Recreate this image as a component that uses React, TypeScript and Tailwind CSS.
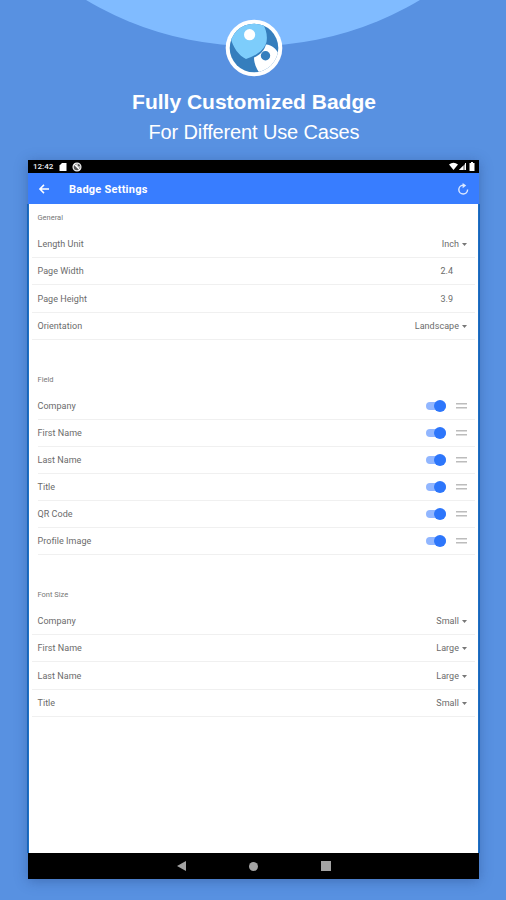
import React, { useState } from 'react';

const generalRows = [
  { label: 'Length Unit', value: 'Inch', select: true },
  { label: 'Page Width', value: '2.4', select: false },
  { label: 'Page Height', value: '3.9', select: false },
  { label: 'Orientation', value: 'Landscape', select: true },
];

const fields = ['Company', 'First Name', 'Last Name', 'Title', 'QR Code', 'Profile Image'];

const fontRows = [
  { label: 'Company', value: 'Small', select: true },
  { label: 'First Name', value: 'Large', select: true },
  { label: 'Last Name', value: 'Large', select: true },
  { label: 'Title', value: 'Small', select: true },
];

function Logo() {
  return (
    <svg className="relative w-[58px] h-[58px]" viewBox="0 0 58 58">
      <defs>
        <clipPath id="disc">
          <circle cx="29" cy="29" r="24.3" />
        </clipPath>
      </defs>
      <circle cx="29" cy="29" r="28.3" fill="#fff" />
      <g clipPath="url(#disc)">
        <rect width="58" height="58" fill="#357ebd" />
        <path d="M2 18L6 0H35C40 7 43 15 41.5 23C39 32 30 37 21 40C14 37 7.500 28 5.500 18Z" fill="#7dcdfb" />
        <path d="M41 25.500C47 26 52 30 54 36L50 56H36C32 51 29 45 29 38.500C35 36 39 32 41 25.500Z" fill="#fff" />
      </g>
      <circle cx="24.6" cy="15.7" r="5.6" fill="#fff" />
      <circle cx="40.5" cy="36.8" r="4.7" fill="#357ebd" />
    </svg>
  );
}

function StatusBar() {
  return (
    <div className="h-[13px] bg-black flex items-center justify-between pl-[5px] pr-1">
      <div className="flex items-center">
        <span className="w-[21px] text-[8px] leading-none font-medium text-gray-100">12:42</span>
        <svg className="w-2 h-2 ml-[5px]" viewBox="0 0 8 8">
          <path d="M3 0H7.5V8H0.5V2.5Z" fill="#fff" />
        </svg>
        <svg className="w-[10px] h-[10px] ml-[5px]" viewBox="0 0 10 10">
          <circle cx="5" cy="5" r="3.9" fill="#555" stroke="#eee" strokeWidth="1.3" />
          <path d="M2 2L8 8M5 2V5H8" fill="none" stroke="#fff" strokeWidth="1.2" />
        </svg>
      </div>
      <svg className="w-[26px] h-[9px]" viewBox="0 0 26 9">
        <path d="M0 2.5Q4.5 -1 9 2.5L4.5 8Z" fill="#fff" />
        <path d="M10 8L17 1V8Z" fill="#aaa" />
        <path d="M10 8L14 4V8ZM16 1H17V8H16Z" fill="#fff" />
        <path d="M20.5 1H22V0H24V1H25.5V9H20.5Z" fill="#fff" />
      </svg>
    </div>
  );
}

function Toolbar() {
  return (
    <div className="h-[31px] bg-[#387dff] flex items-center pl-[10px] pr-[10px] text-white">
      <svg className="w-3 h-3" viewBox="0 0 12 12" fill="none" stroke="currentColor" strokeWidth="1.5">
        <path d="M11 6H2M6 1.9L1.9 6L6 10.1" />
      </svg>
      <span className="ml-[19px] pt-px text-[11px] font-bold leading-none tracking-[0.24px]">Badge Settings</span>
      <svg className="w-3 h-3 ml-auto" viewBox="0 0 12 12">
        <path d="M6 2.2A4.4 4.4 0 1 0 10.6 6.6" fill="none" stroke="#dce8ff" strokeWidth="1.4" />
        <path d="M5.6 0L9.2 2.6L5.6 5.2Z" fill="#dce8ff" />
      </svg>
    </div>
  );
}

function SectionTitle({ children }: { children: React.ReactNode }) {
  return (
    <div className="h-[25px] flex items-center pl-[9.5px] text-[7.5px] leading-none text-[#777]">
      {children}
    </div>
  );
}

function ValueRow({ label, value, select }: { label: string; value: string; select: boolean }) {
  return (
    <div className="h-[27.5px] ml-1 mr-[4px] pt-[1.5px] pl-[5.5px] pr-[8px] border-b border-[#f0f0f0] flex items-center text-[9px] leading-none tracking-[0.04px] text-[#6b6b6b]">
      <span>{label}</span>
      <span className={select ? 'ml-auto mr-[3px]' : 'ml-auto mr-[14px]'}>{value}</span>
      {select && (
        <svg className="w-[5px] h-[3px]" viewBox="0 0 5 3">
          <path d="M0 0H5L2.5 3Z" fill="#777" />
        </svg>
      )}
    </div>
  );
}

function FieldRow({ label }: { label: string }) {
  const [on, setOn] = useState(true);

  return (
    <div className="h-[27px] ml-[9.5px] mr-[4px] pr-[8px] border-b border-[#f0f0f0] flex items-center text-[9px] leading-none tracking-[0.04px] text-[#6b6b6b]">
      <span className="pt-px">{label}</span>
      <button
        className={on ? 'ml-auto w-5 h-2 rounded-full bg-[#91b6ff] flex items-center justify-end' : 'ml-auto w-5 h-2 rounded-full bg-gray-300 flex items-center'}
        onClick={() => setOn(!on)}
      >
        <span className={on ? 'w-3 h-3 rounded-full bg-[#2d76fb] shrink-0' : 'w-3 h-3 rounded-full bg-gray-100 shrink-0'} />
      </button>
      <svg className="ml-[10px] w-[11px] h-[6px]" viewBox="0 0 11 6">
        <path d="M0 0H11V1.6H0ZM0 4H11V5.6H0Z" fill="#bcbcbc" />
      </svg>
    </div>
  );
}

export default function App() {
  return (
    <div className="relative h-[900px] w-[506px] overflow-hidden bg-[#5891e1] flex flex-col items-center font-['Liberation_Sans',sans-serif]">
      {/* Header arc behind the logo */}
      <div className="absolute top-[-606px] left-[-73px] w-[652px] h-[652px] rounded-full bg-[#80bbff]" />

      <div className="relative pt-[19px] pl-[2px] h-[160px] w-full flex flex-col items-center text-white shrink-0">
        <Logo />
        <h1 className="mt-[10px] text-[21px] leading-[30px] font-bold whitespace-nowrap">Fully Customized Badge</h1>
        <p className="text-[20px] leading-[30px] tracking-[-0.14px] whitespace-nowrap">For Different Use Cases</p>
      </div>

      {/* Tablet screen */}
      <div className="relative w-[451px] ml-[1px] h-[719px] shrink-0 bg-black flex flex-col shadow-[0_2px_12px_rgba(30,60,120,0.4)] font-[Roboto,sans-serif]">
        <StatusBar />
        <Toolbar />

        <div className="h-[649px] bg-white pt-[1px] border-x border-[#1f6fc4] shadow-[-1px_0_0_#1764b9,1px_0_0_#1764b9]">
          <div className="-mx-px">
            <SectionTitle>General</SectionTitle>
            {generalRows.map((row) => (
              <ValueRow key={row.label} {...row} />
            ))}

            <div className="pt-[27.5px]">
              <SectionTitle>Field</SectionTitle>
              {fields.map((field) => (
                <FieldRow key={field} label={field} />
              ))}
            </div>

            <div className="pt-[27.5px]">
              <SectionTitle>Font Size</SectionTitle>
              {fontRows.map((row) => (
                <ValueRow key={row.label} {...row} />
              ))}
            </div>
          </div>
        </div>

        {/* Android navigation */}
        <div className="flex-1 flex items-center justify-center gap-[63px]">
          <svg className="w-[9px] h-[10px]" viewBox="0 0 9 10">
            <path d="M9 0V10L0 5Z" fill="#a3a3a3" />
          </svg>
          <div className="w-[9px] h-[9px] rounded-full bg-[#a3a3a3]" />
          <div className="w-[10px] h-[10px] bg-[#a3a3a3]" />
        </div>
      </div>
    </div>
  );
}
